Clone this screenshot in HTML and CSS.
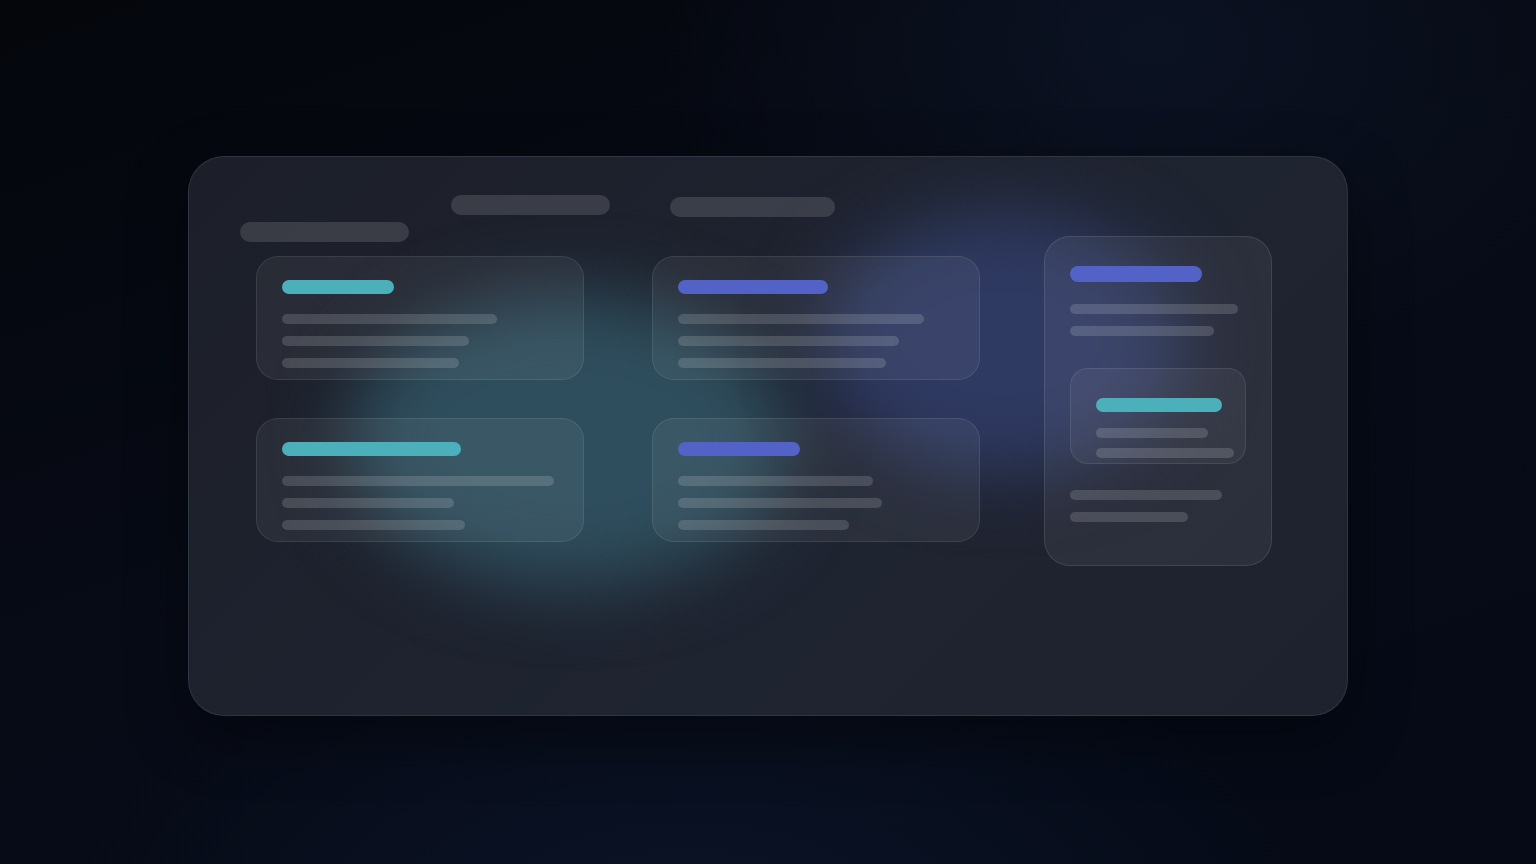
FILE: index.html
```html
<!DOCTYPE html>
<html>
<head>
<meta charset="utf-8">
<link rel="stylesheet" href="styles.css">
</head>
<body>
<div class="stage">
  <div class="panel">
    <div class="blob blob-teal"></div>
    <div class="blob blob-indigo"></div>
    <div class="header">
      <div class="pill pill-a"></div>
      <div class="pill pill-b"></div>
      <div class="pill pill-c"></div>
    </div>
    <div class="main">
      <div class="grid">
        <div class="card">
          <div class="accent teal" style="width:112px"></div>
          <div class="lines">
            <div class="line" style="width:215px"></div>
            <div class="line" style="width:187px"></div>
            <div class="line" style="width:177px"></div>
          </div>
        </div>
        <div class="card">
          <div class="accent indigo" style="width:150px"></div>
          <div class="lines">
            <div class="line" style="width:246px"></div>
            <div class="line" style="width:221px"></div>
            <div class="line" style="width:208px"></div>
          </div>
        </div>
        <div class="card">
          <div class="accent teal" style="width:179px"></div>
          <div class="lines">
            <div class="line" style="width:272px"></div>
            <div class="line" style="width:172px"></div>
            <div class="line" style="width:183px"></div>
          </div>
        </div>
        <div class="card">
          <div class="accent indigo" style="width:122px"></div>
          <div class="lines">
            <div class="line" style="width:195px"></div>
            <div class="line" style="width:204px"></div>
            <div class="line" style="width:171px"></div>
          </div>
        </div>
      </div>
      <div class="side">
        <div class="accent indigo side-accent" style="width:132px"></div>
        <div class="lines">
          <div class="line" style="width:168px"></div>
          <div class="line" style="width:144px"></div>
        </div>
        <div class="inner">
          <div class="accent teal" style="width:126px"></div>
          <div class="lines tight">
            <div class="line" style="width:112px"></div>
            <div class="line" style="width:138px"></div>
          </div>
        </div>
        <div class="lines">
          <div class="line" style="width:152px"></div>
          <div class="line" style="width:118px"></div>
        </div>
      </div>
    </div>
  </div>
</div>
</body>
</html>
```
FILE: styles.css
```css
* { box-sizing: border-box; }
html, body { margin: 0; padding: 0; }
body {
  width: 1536px;
  height: 864px;
  overflow: hidden;
  background:
    radial-gradient(ellipse 900px 500px at 45% 110%, #0b1428 0%, rgba(11,20,40,0) 70%),
    radial-gradient(ellipse 700px 500px at 75% 5%, #0b1222 0%, rgba(11,18,34,0) 70%),
    linear-gradient(160deg, #04060c 0%, #070b16 50%, #050a16 100%);
  font-family: "Inter", "Liberation Sans", sans-serif;
}
.stage {
  padding: 156px 188px 0 188px;
}
.panel {
  position: relative;
  width: 1160px;
  height: 560px;
  border-radius: 36px;
  background: linear-gradient(135deg, #1c1f29 0%, #1f2431 60%, #1e222e 100%);
  border: 1px solid rgba(255,255,255,0.09);
  overflow: hidden;
  padding-top: 38px;
  box-shadow: 0 20px 60px rgba(0,0,0,0.4);
}
.blob {
  position: absolute;
  border-radius: 50%;
  filter: blur(36px);
  z-index: 0;
}
.blob-teal {
  left: 160px;
  top: 138px;
  width: 440px;
  height: 290px;
  background: #2f4e5d;
}
.blob-indigo {
  left: 630px;
  top: 56px;
  width: 365px;
  height: 260px;
  background: #2f3a62;
}
.header {
  position: relative;
  z-index: 1;
  display: flex;
  align-items: flex-start;
  height: 20px;
  padding-left: 51px;
}
.pill {
  height: 20px;
  border-radius: 10px;
  background: rgba(255,255,255,0.13);
}
.pill-a { width: 169px; margin-top: 27px; }
.pill-b { width: 159px; margin-left: 42px; }
.pill-c { width: 165px; margin-left: 60px; margin-top: 2px; }
.main {
  position: relative;
  z-index: 1;
  display: flex;
  align-items: flex-start;
  margin-top: 21px;
  padding-left: 67px;
  gap: 64px;
}
.grid {
  display: grid;
  grid-template-columns: 328px 328px;
  column-gap: 68px;
  row-gap: 38px;
  margin-top: 20px;
}
.card {
  height: 124px;
  border-radius: 22px;
  background: rgba(255,255,255,0.055);
  border: 1px solid rgba(255,255,255,0.09);
  padding: 23px 25px;
}
.accent {
  height: 14px;
  border-radius: 7px;
  margin-bottom: 20px;
}
.accent.teal { background: #4bb0ba; }
.accent.indigo { background: #5262c6; }
.lines {
  display: flex;
  flex-direction: column;
  gap: 12px;
}
.lines.tight { gap: 10px; }
.line {
  height: 10px;
  border-radius: 5px;
  background: rgba(255,255,255,0.15);
}
.side {
  width: 228px;
  height: 330px;
  border-radius: 26px;
  background: rgba(255,255,255,0.06);
  border: 1px solid rgba(255,255,255,0.1);
  padding: 29px 25px;
}
.side-accent {
  height: 16px;
  border-radius: 8px;
  margin-bottom: 22px;
}
.inner {
  width: 176px;
  height: 96px;
  margin: 32px 0 26px 0;
  border-radius: 18px;
  background: rgba(255,255,255,0.05);
  border: 1px solid rgba(255,255,255,0.09);
  padding: 29px 25px;
}
.inner .accent { margin-bottom: 16px; }
```
